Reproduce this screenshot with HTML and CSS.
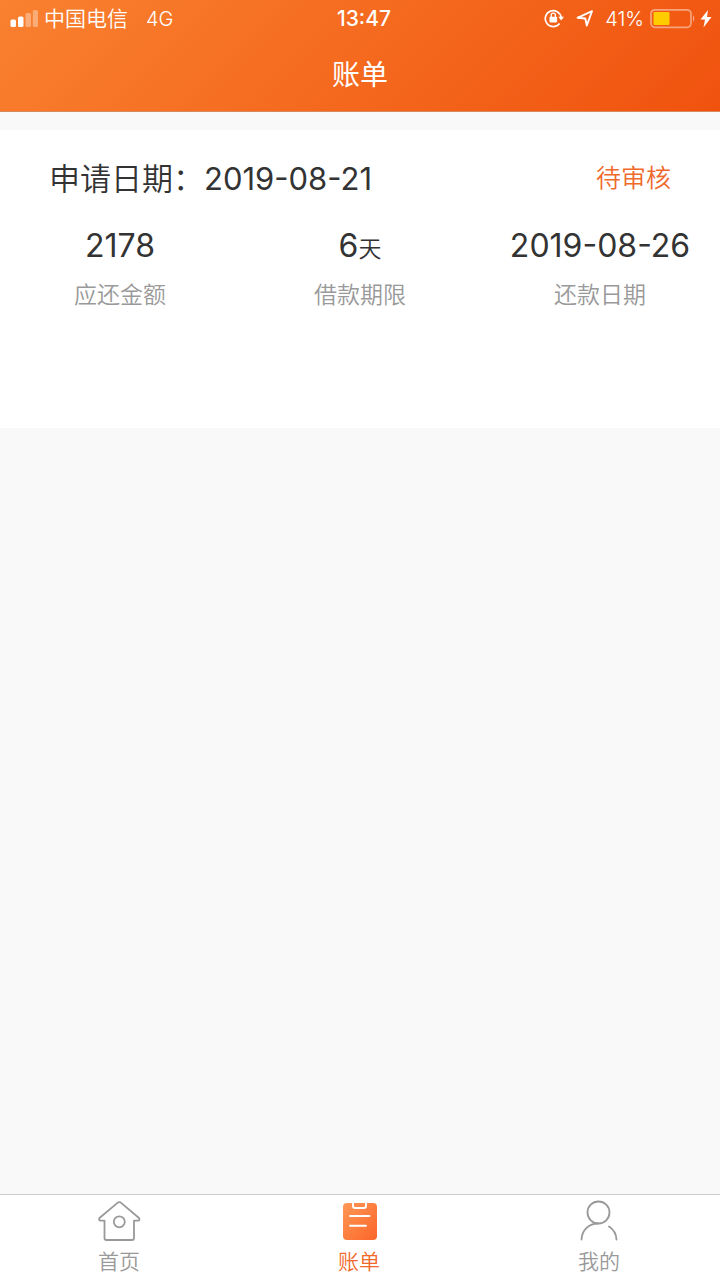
FILE: index.html
```
<!DOCTYPE html>
<html lang="zh-CN">
<head>
<meta charset="utf-8">
<meta name="viewport" content="width=device-width, initial-scale=1">
<title>账单</title>
<link rel="stylesheet" href="styles.css">
</head>
<body>
<header class="header">
  <div class="status">
    <div class="status-left">
      <svg class="signal" viewBox="0 0 28 18" fill="#fff" aria-hidden="true"><rect x=".5" y="9.500" width="5.500" height="7.500" rx="1.500"/><rect x="8" y="6.500" width="5.500" height="10.500" rx="1.500"/><g opacity=".35"><rect x="15.500" y="3" width="5.500" height="14" rx="1.500"/><rect x="22.800" y="0" width="5.200" height="17" rx="1.500"/></g></svg>
      <span>中国电信</span>
      <span class="network">4G</span>
    </div>
    <time class="clock">13:47</time>
    <div class="status-right">
      <svg class="lock" viewBox="0 0 20 20" fill="none" stroke="#fff" stroke-width="1.700" aria-hidden="true"><path d="M15.600 14.600A8 8 0 1 1 17.200 8.500"/><path d="M14.300 7.800H20L17.200 11.500Z" fill="#fff" stroke="none"/><rect x="5.500" y="7.800" width="7.600" height="5.600" rx=".8" fill="#fff" stroke="none"/><path d="M7.200 8V6.200a2.100 2.100 0 0 1 4.200 0V8" stroke-width="1.400"/></svg>
      <svg class="location" viewBox="0 0 18 18" fill="none" stroke="#fff" stroke-width="1.900" stroke-linejoin="round" aria-hidden="true"><path d="M1.500 7.800 16 1.200 10.800 15.500 9.300 8.500Z"/></svg>
      <span>41%</span>
      <svg class="battery" viewBox="0 0 46 20" aria-hidden="true"><rect x="1" y=".8" width="40" height="17.500" rx="4" fill="none" stroke="#fff" stroke-opacity=".45" stroke-width="1.700"/><rect x="3.500" y="3" width="16" height="13" rx="1" fill="#fc0"/><path d="M43 6q2.500 3.500 0 7Z" fill="#fff" opacity=".5"/></svg>
      <svg class="bolt" viewBox="0 0 12 18" fill="#fff" aria-hidden="true"><path d="M8 0 .5 9.500H5L3.500 17.500 11.500 7H7Z"/></svg>
    </div>
  </div>
  <h1 class="title">账单</h1>
</header>
<main class="content">
  <section class="card">
    <div class="card-head">
      <h2 class="applied">申请日期：<span class="date">2019-08-21</span></h2>
      <span class="state">待审核</span>
    </div>
    <dl class="facts">
      <div class="fact"><dt>应还金额</dt><dd>2178</dd></div>
      <div class="fact"><dt>借款期限</dt><dd>6<small>天</small></dd></div>
      <div class="fact"><dt>还款日期</dt><dd>2019-08-26</dd></div>
    </dl>
  </section>
</main>
<nav class="tabs">
  <a class="tab" href="#home">
    <svg class="tab-icon" viewBox="0 0 44 44" fill="none" stroke="#999" stroke-width="1.800" stroke-linejoin="round" aria-hidden="true"><path d="M20.800 3.600 2.500 19q-1.200 2.500 1 2.700H7.500V39q0 2 2 2H35q2 0 2-2V21.700H41q2.200-.2 1-2.700L23.800 3.600Q22.300 2.500 20.800 3.600Z"/><circle cx="22.300" cy="22.800" r="5.500"/></svg>
    <span>首页</span>
  </a>
  <a class="tab tab-active" href="#bill" aria-current="page">
    <svg class="tab-icon" viewBox="0 0 44 44" fill="none" aria-hidden="true"><defs><linearGradient id="sheet" x1="0" y1="0" x2="1" y2="1"><stop stop-color="#ff9857"/><stop offset="1" stop-color="#fb6628"/></linearGradient></defs><rect x="6" y="4" width="34" height="37" rx="4" fill="url(#sheet)"/><path d="M16 3.500V7q0 2 2 2h9q2 0 2-2V3.500M13 17H32.500M13 26.800H29" stroke="#fff" stroke-width="1.900" stroke-linecap="round"/></svg>
    <span>账单</span>
  </a>
  <a class="tab" href="#mine">
    <svg class="tab-icon" viewBox="0 0 44 44" fill="none" stroke="#999" stroke-width="1.800" stroke-linecap="round" aria-hidden="true"><circle cx="21.500" cy="13.500" r="11"/><path d="M4.500 40.500C5 31 12 24.500 21 24.500M32 27.500Q39 32 39.500 40.500"/></svg>
    <span>我的</span>
  </a>
</nav>
</body>
</html>
```
FILE: styles.css
```
* {
  box-sizing: border-box;
}

body {
  display: flex;
  flex-direction: column;
  min-height: 100vh;
  margin: 0;
  background: #f9f9f9;
  color: #333;
  font-family: Inter, "Noto Sans CJK SC", sans-serif;
  font-weight: 350;
}

h1, h2, dl, dd {
  margin: 0;
  font-weight: inherit;
}

.header {
  background: linear-gradient(135deg, #f9812f, #f0520e);
  color: #fff;
  border-bottom: 1px solid #d98a5c;
}

.status {
  display: grid;
  grid-template-columns: 1fr auto 1fr;
  align-items: center;
  height: 36px;
  padding: 0 8px 0 10px;
  font-size: 20px;
  line-height: 38px;
}

.status-left,
.status-right {
  display: flex;
  align-items: center;
}

.status-left {
  font-size: 21px;
}

.status-right {
  justify-content: flex-end;
}

.signal {
  width: 28px;
  height: 18px;
  margin-right: 6px;
}

.network {
  margin-left: 18px;
  font-size: 20px;
}

.clock {
  padding-left: 6px;
  font-size: 21px;
  font-weight: 500;
}

.lock {
  width: 20px;
  height: 20px;
  margin-right: 12px;
}

.location {
  width: 18px;
  height: 18px;
  margin-right: 11px;
}

.battery {
  width: 46px;
  height: 20px;
  margin: 0 4px 0 6px;
}

.bolt {
  width: 12px;
  height: 18px;
}

.title {
  height: 75px;
  padding-top: 2px;
  font-size: 28px;
  font-weight: 400;
  line-height: 75px;
  text-align: center;
}

.content {
  flex: 1;
  padding-top: 18px;
}

.card {
  min-height: 298px;
  padding-top: 24px;
  background: #fff;
}

.card-head {
  display: flex;
  justify-content: space-between;
  align-items: center;
  padding: 0 49px;
  line-height: 49px;
}

.applied {
  font-size: 31px;
}

.date {
  font-weight: 400;
}

.state {
  color: #f0692c;
  font-size: 25px;
}

.facts {
  display: grid;
  grid-template-columns: repeat(3, 1fr);
  margin-top: 14px;
  text-align: center;
}

.fact {
  display: flex;
  flex-direction: column-reverse;
  justify-content: flex-end;
}

.fact dd {
  font-size: 32px;
  font-weight: 400;
  line-height: 58px;
}

.fact small {
  font-size: 23px;
  font-weight: 350;
  line-height: 1;
}

.fact dt {
  color: #999;
  font-size: 23px;
  line-height: 40px;
}

.tabs {
  display: grid;
  grid-template-columns: repeat(3, 1fr);
  background: #fff;
  border-top: 1px solid #ccc;
}

.tab {
  display: flex;
  flex-direction: column;
  align-items: center;
  padding: 4px 2px 0 0;
  color: #999;
  font-size: 21px;
  line-height: 37px;
  text-decoration: none;
}

.tab-active {
  color: #f0692c;
}

.tab-icon {
  width: 44px;
  height: 44px;
}
```
